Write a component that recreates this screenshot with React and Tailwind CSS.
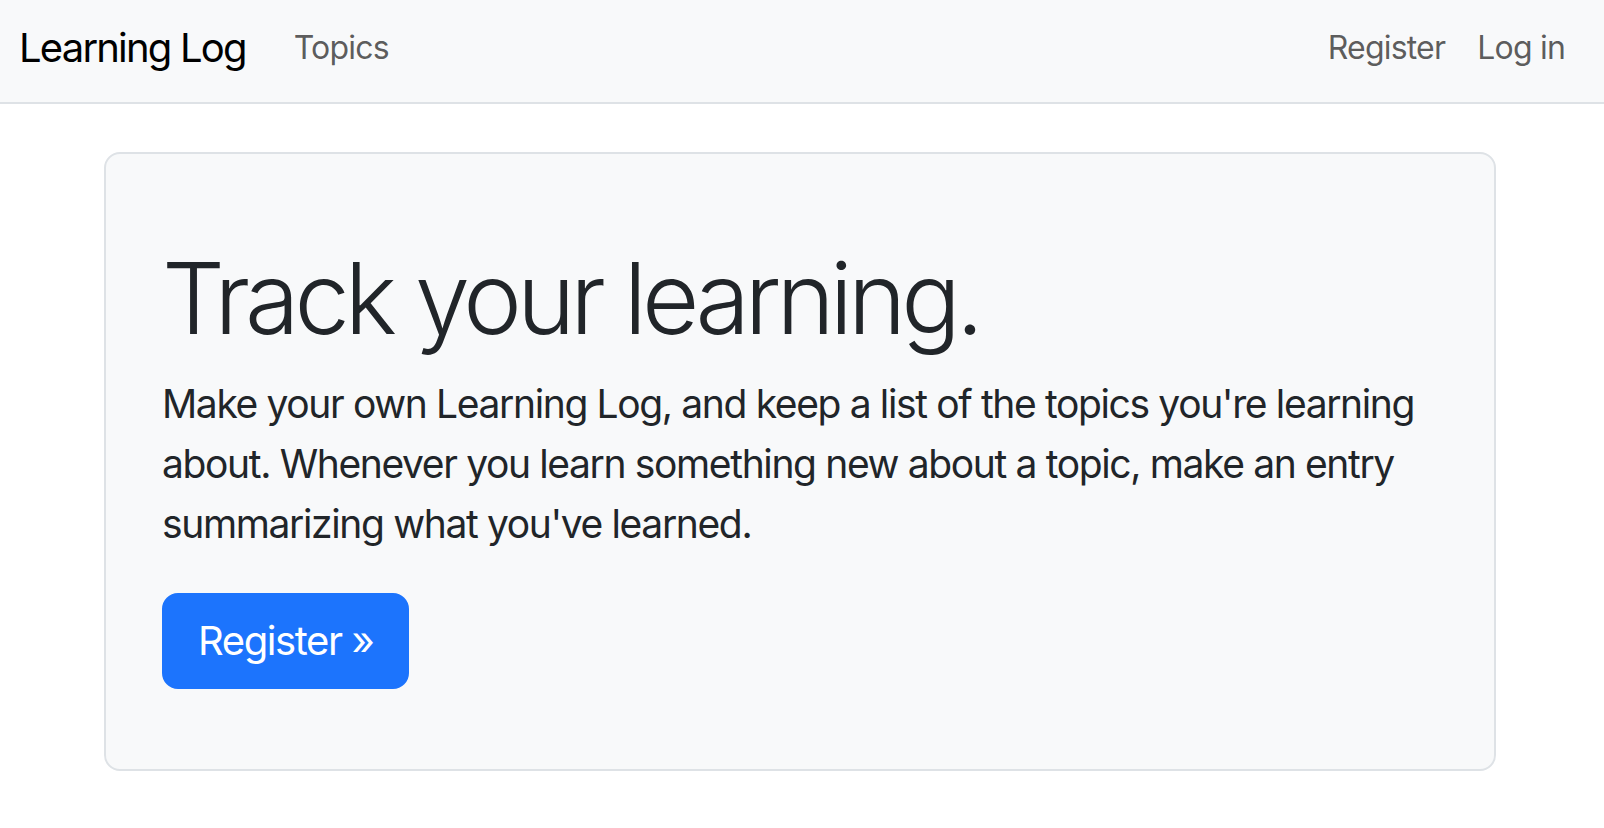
export default function App() {
  return (
    <div className="min-h-screen bg-white font-['Inter','Liberation_Sans',sans-serif] text-[#212529]">
      <nav className="h-[104px] bg-[#f8f9fa] border-b-2 border-[#dee2e6] flex items-center justify-between pl-[19px] pr-[23px] pb-[6px]">
        <div className="flex items-center">
          <a href="#" className="text-[40px] leading-[60px] text-black tracking-[-0.045em]">
            Learning Log
          </a>
          <a href="#" className="ml-[32px] px-[16px] text-[32px] leading-[48px] text-black/65 tracking-[-0.025em]">
            Topics
          </a>
        </div>
        <div className="flex items-center">
          <a href="#" className="px-[16px] text-[32px] leading-[48px] text-black/65 tracking-[-0.025em]">
            Register
          </a>
          <a href="#" className="px-[16px] text-[32px] leading-[48px] text-black/65 tracking-[-0.025em]">
            Log in
          </a>
        </div>
      </nav>

      <main className="pt-[48px] pl-[104px]">
        <div className="w-[1392px] bg-[#f8f9fa] border-2 border-[#dee2e6] rounded-[16px] px-[56px] pt-[84px] pb-[80px]">
          <h1 className="text-[99px] leading-[120px] font-light tracking-[-0.05em] mb-[16px] whitespace-nowrap">
            Track your learning.
          </h1>
          <p className="text-[39px] leading-[60px] tracking-[-0.035em] mb-[39px] whitespace-nowrap">
            Make your own Learning Log, and keep a list of the topics you're learning
            <br />
            about. Whenever you learn something new about a topic, make an entry
            <br />
            summarizing what you've learned.
          </p>
          <a
            href="#"
            className="inline-block bg-[#1c74fd] text-white text-[40px] leading-[60px] tracking-[-0.035em] px-[34px] py-[16px] border-2 border-[#1c74fd] rounded-[16px]"
          >
            Register »
          </a>
        </div>
      </main>
    </div>
  )
}
